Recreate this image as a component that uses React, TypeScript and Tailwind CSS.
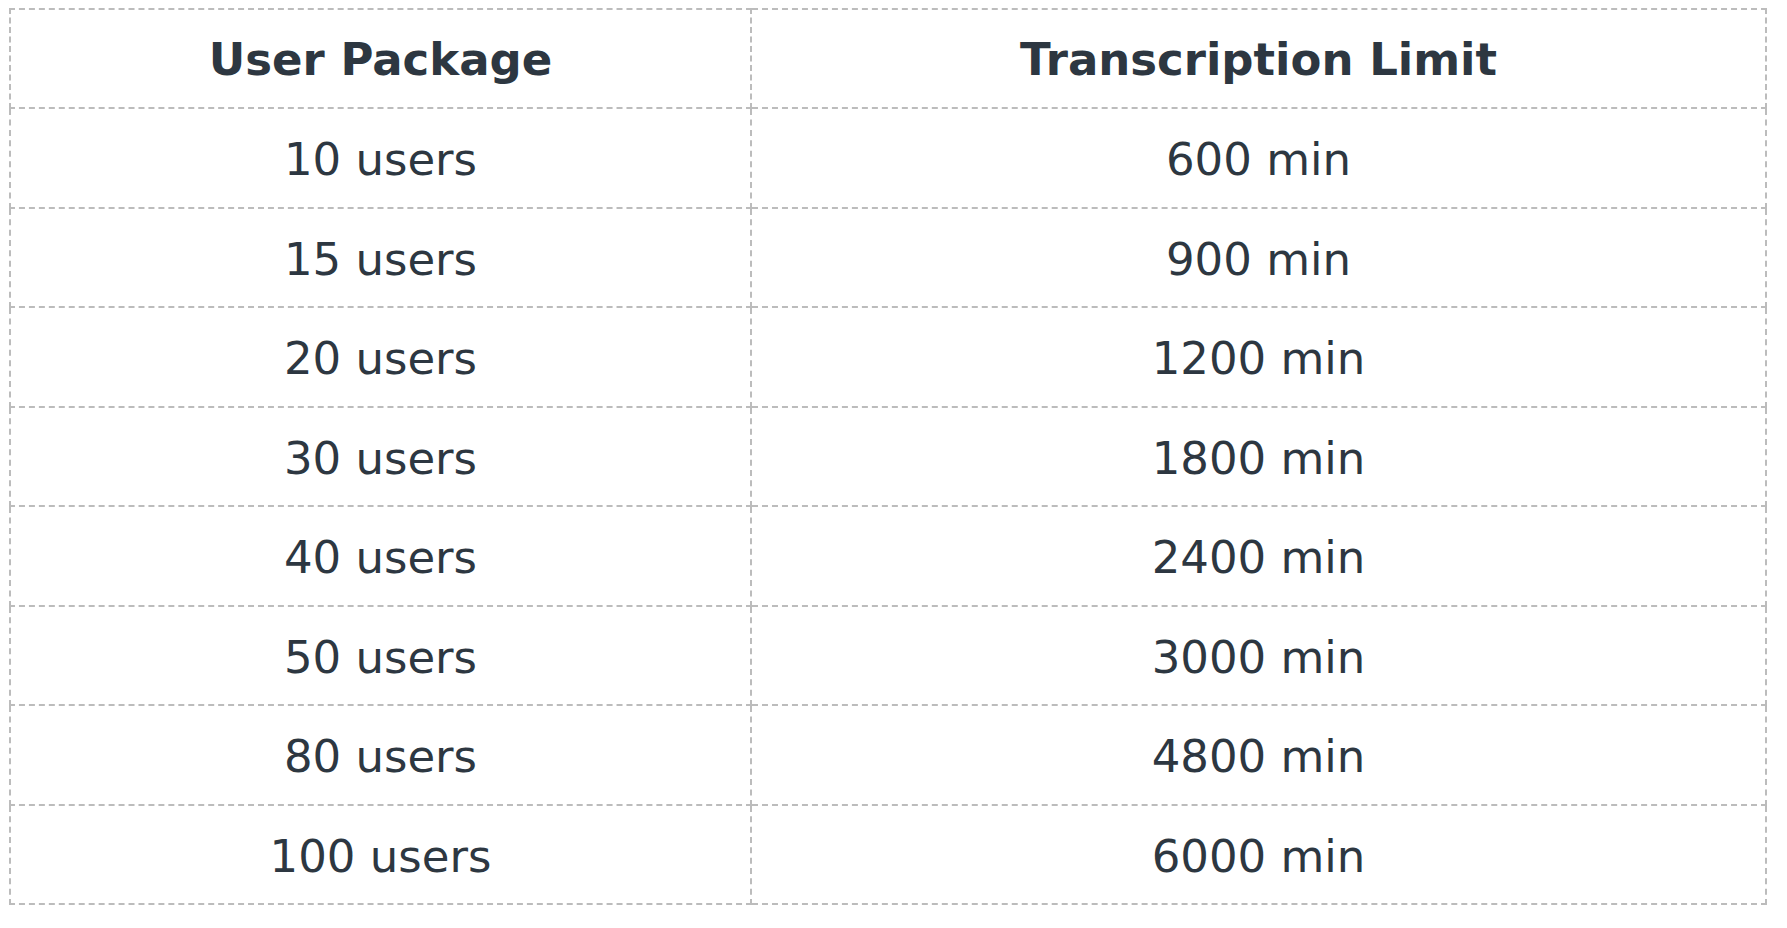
const rows = [
  { users: "10 users", limit: "600 min" },
  { users: "15 users", limit: "900 min" },
  { users: "20 users", limit: "1200 min" },
  { users: "30 users", limit: "1800 min" },
  { users: "40 users", limit: "2400 min" },
  { users: "50 users", limit: "3000 min" },
  { users: "80 users", limit: "4800 min" },
  { users: "100 users", limit: "6000 min" },
];

export default function App() {
  return (
    <div className="min-h-screen bg-white pl-[9px] pt-[8px]">
      <table className="w-[1758px] border-collapse border-2 border-dashed border-[#bcbcbc] text-[45px] text-[#2d3741] [font-family:'DejaVu_Sans',Verdana,sans-serif]">
        <thead>
          <tr className="h-[99px]">
            <th className="w-[741px] border-2 border-dashed border-[#bcbcbc] pt-[3px] text-center font-bold">
              User Package
            </th>
            <th className="border-2 border-dashed border-[#bcbcbc] pt-[3px] text-center font-bold">
              Transcription Limit
            </th>
          </tr>
        </thead>
        <tbody>
          {rows.map((r) => (
            <tr key={r.users} className="h-[99.5px]">
              <td className="border-2 border-dashed border-[#bcbcbc] pt-[4px] text-center">{r.users}</td>
              <td className="border-2 border-dashed border-[#bcbcbc] pt-[4px] text-center">{r.limit}</td>
            </tr>
          ))}
        </tbody>
      </table>
    </div>
  );
}
